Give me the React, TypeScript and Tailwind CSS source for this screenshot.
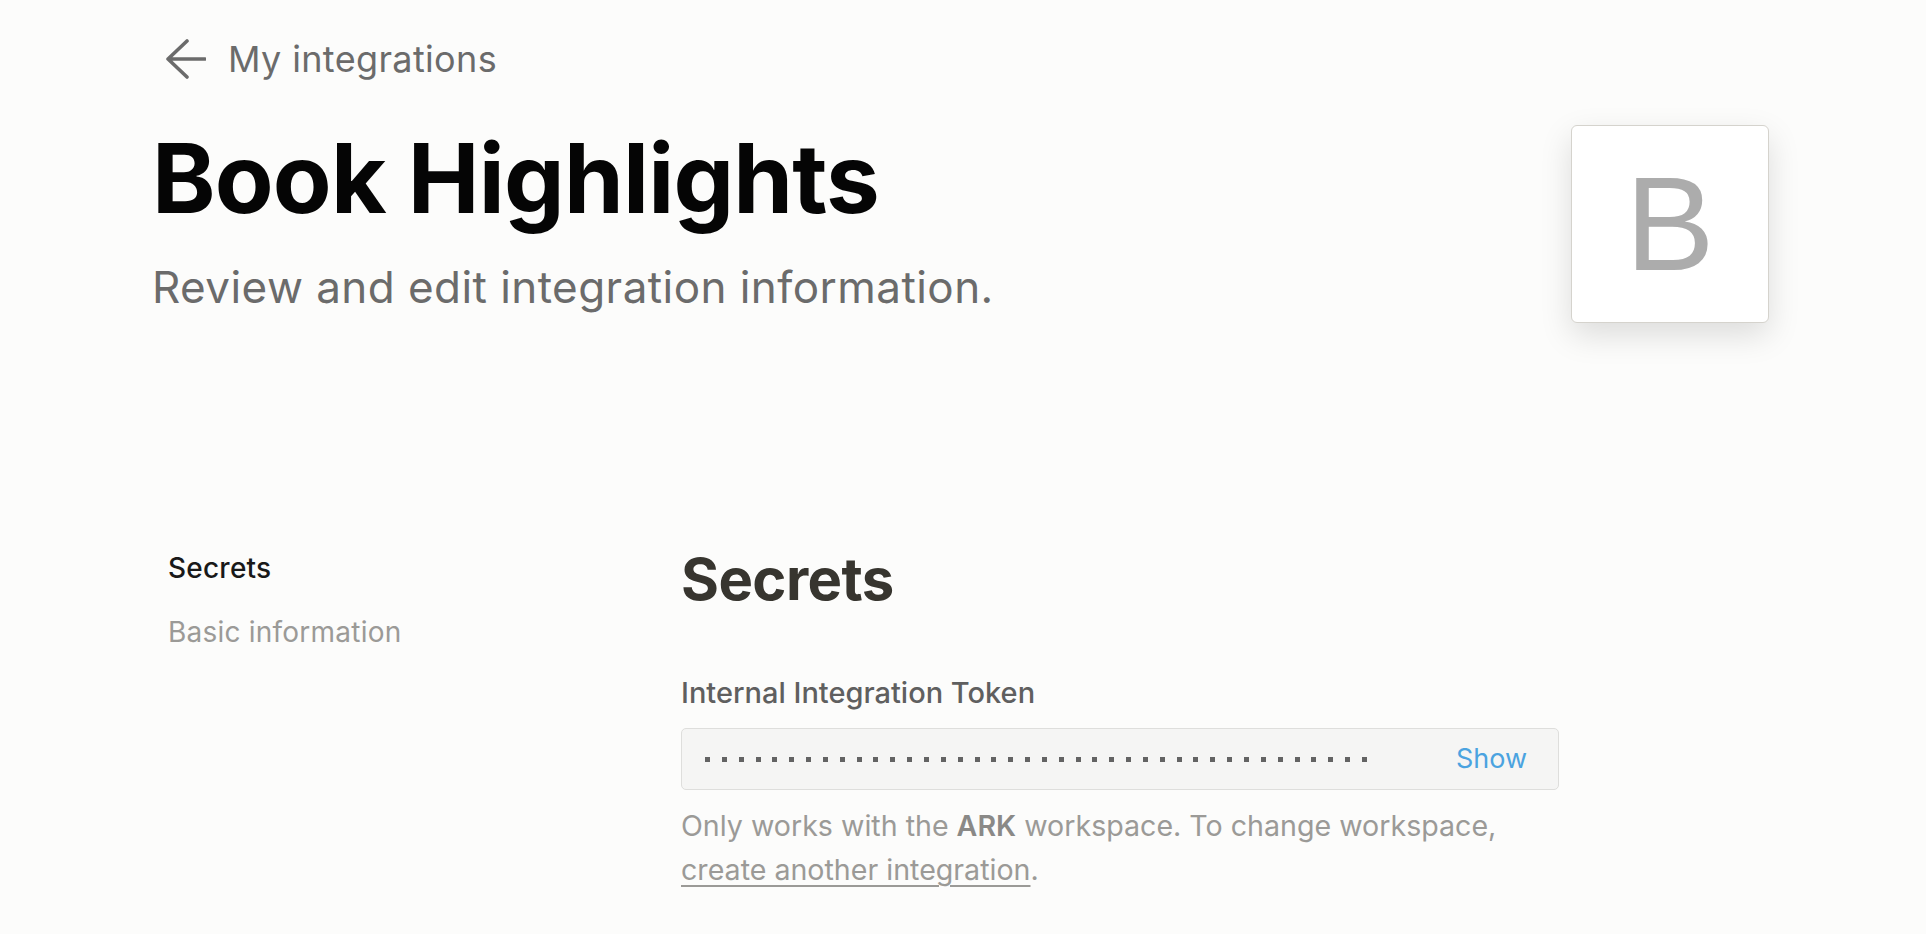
const font = { fontFamily: 'Inter, "Noto Sans", sans-serif' };

const BackArrow = () => (
  <svg width="42" height="40" viewBox="0 0 42 40" fill="none" className="shrink-0">
    <path d="M23 2 L4 20 L23 38 M4 20 H41" stroke="#6b6b6b" strokeWidth="3.6" strokeLinecap="round" strokeLinejoin="round" />
  </svg>
);

const dots = Array.from({ length: 40 });

export default function App() {
  return (
    <div className="min-h-[934px] w-full bg-[#fcfcfb] text-[#37352f]" style={font}>
      <div className="pl-[152px] pr-[157px]">
        {/* header */}
        <div className="flex justify-between">
          <div className="flex flex-col">
            <a href="#" className="mt-[37px] ml-[12px] flex items-center gap-[22px] text-[36px] leading-[44px] tracking-[0.01em] text-[#6b6b6b]">
              <BackArrow />
              <span>My integrations</span>
            </a>
            <h1 className="mt-[49px] text-[96px] font-bold leading-[96px] tracking-[-0.008em] text-[#050505]">
              Book Highlights
            </h1>
            <p className="mt-[35px] text-[44px] leading-[52px] tracking-[0.01em] text-[#6b6b6b]">
              Review and edit integration information.
            </p>
          </div>
          <div className="mt-[125px] flex h-[198px] w-[198px] items-center justify-center rounded-[6px] border border-[#d5d3cd] bg-white shadow-[0_12px_32px_rgba(0,0,0,0.13)]">
            <span className="text-[134px] leading-none text-[#acacac]" style={{ fontFamily: '"Liberation Sans", Arial, sans-serif' }}>
              B
            </span>
          </div>
        </div>

        {/* body */}
        <div className="mt-[227px] flex">
          <nav className="ml-[16px] flex w-[513px] shrink-0 flex-col gap-[30px] pt-[1px] text-[28px] leading-[34px] tracking-[0.008em]">
            <span className="font-medium text-[#191919]">Secrets</span>
            <span className="text-[#9b9a97]">Basic information</span>
          </nav>
          <section className="flex w-[878px] flex-col">
            <h2 className="text-[58px] font-bold leading-[58px] tracking-[-0.01em] text-[#37352f]">Secrets</h2>
            <label className="mt-[68px] text-[29px] font-medium leading-[34px] text-[#5f5f5f]">
              Internal Integration Token
            </label>
            <div className="mt-[18px] flex h-[62px] items-center justify-between rounded-[5px] border border-[#dededc] bg-[#f5f5f4] pl-[23px] pr-[31px]">
              <div className="flex items-center gap-[11.85px]">
                {dots.map((_, i) => (
                  <span key={i} className="block h-[5px] w-[5px] bg-[#636363]" />
                ))}
              </div>
              <button className="text-[27px] leading-[34px] text-[#4ba3e0]">Show</button>
            </div>
            <p className="mt-[14px] text-[28.6px] leading-[44px] text-[#9b9a97]">
              Only works with the <b className="font-semibold text-[#8a8987]">ARK</b> workspace. To change workspace,
              <br />
              <a href="#" className="underline decoration-[1.5px] underline-offset-[5px]">create another integration</a>.
            </p>
          </section>
        </div>
      </div>
    </div>
  );
}
